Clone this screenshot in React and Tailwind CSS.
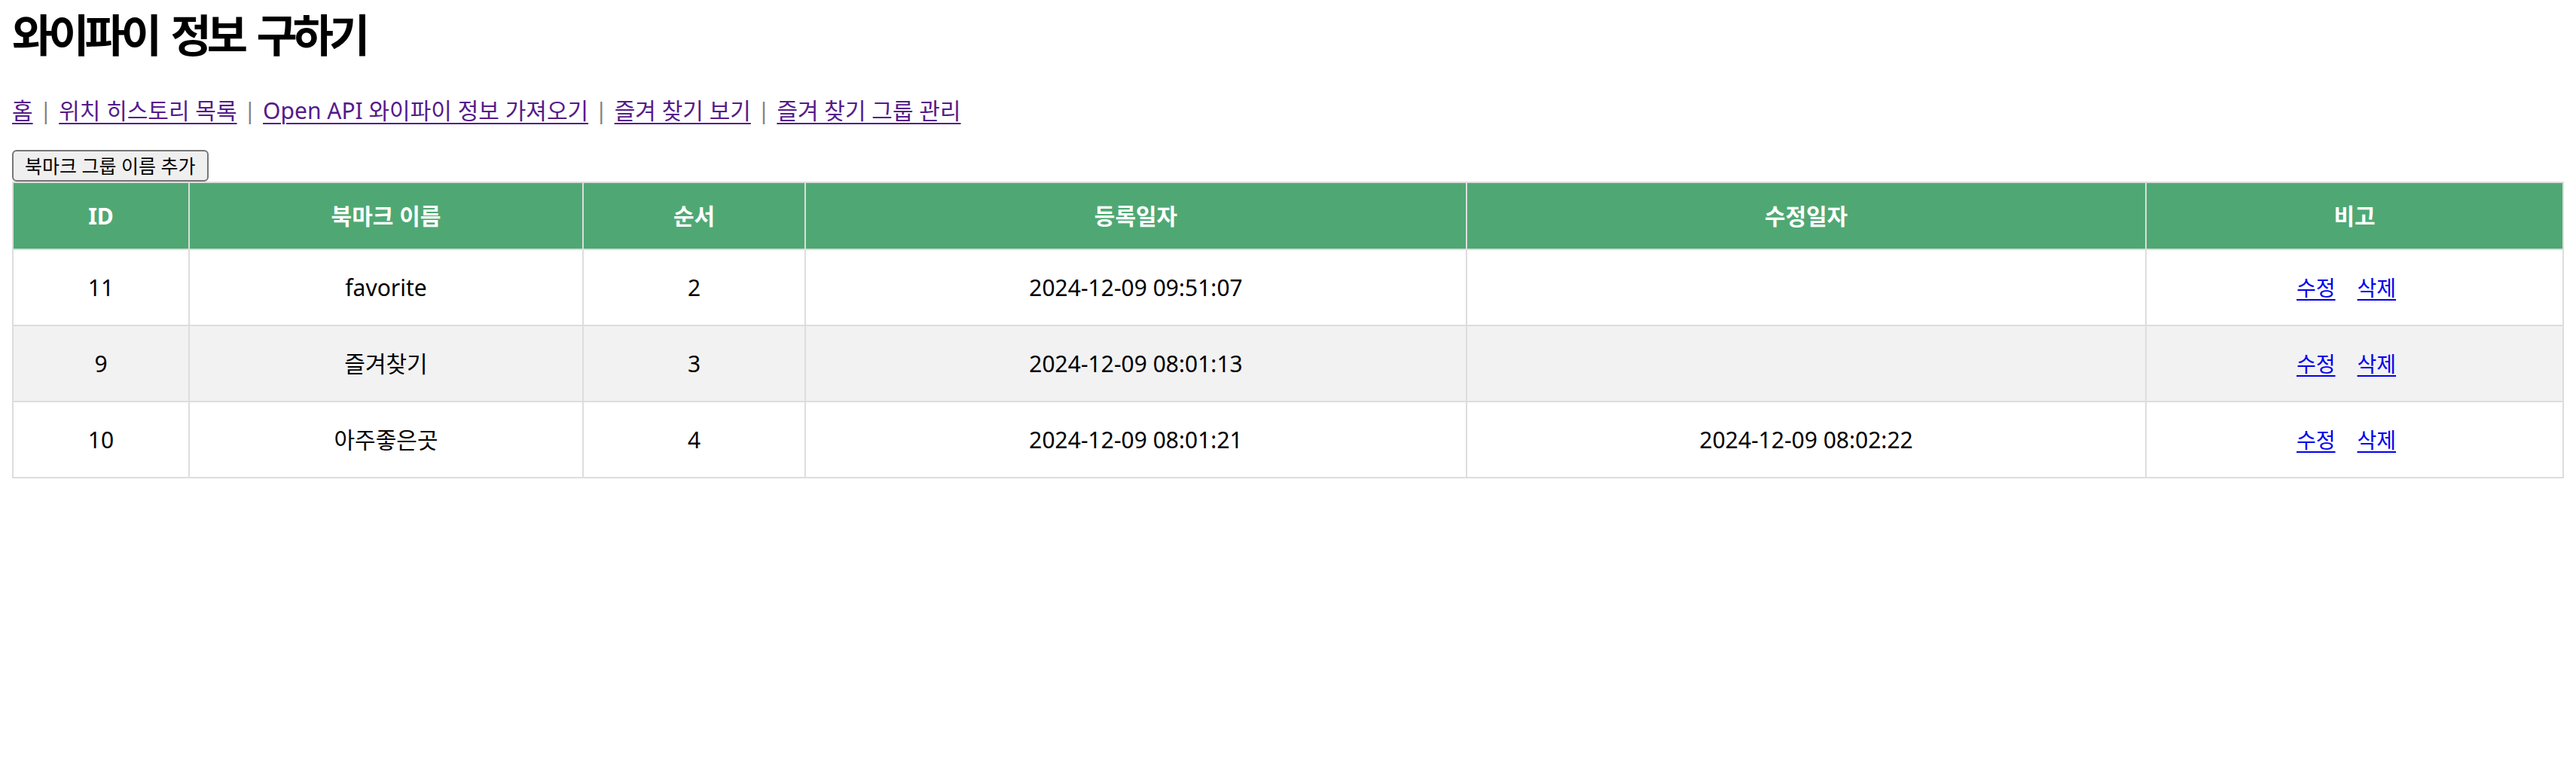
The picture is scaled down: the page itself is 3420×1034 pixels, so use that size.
import React from "react";

const rows = [
  { id: "11", name: "favorite", order: "2", created: "2024-12-09 09:51:07", updated: "" },
  { id: "9", name: "즐겨찾기", order: "3", created: "2024-12-09 08:01:13", updated: "" },
  { id: "10", name: "아주좋은곳", order: "4", created: "2024-12-09 08:01:21", updated: "2024-12-09 08:02:22" },
];

const links = ["홈", "위치 히스토리 목록", "Open API 와이파이 정보 가져오기", "즐겨 찾기 보기", "즐겨 찾기 그룹 관리"];

export default function App() {
  return (
    <div
      className="min-h-screen bg-white px-[16px] text-black"
      style={{ fontFamily: '"Noto Sans", "Noto Sans CJK KR", sans-serif' }}
    >
      <h1 className="m-0 text-[59px] font-bold leading-[88px] tracking-[-6px] [word-spacing:10px] [font-family:'Noto_Sans_CJK_KR',sans-serif]">
        와이파이 정보 구하기
      </h1>

      <nav className="mt-[35px] flex h-[48px] items-center text-[30px] leading-[48px]">
        {links.map((l, i) => (
          <React.Fragment key={l}>
            {i > 0 && <span className="px-[9px] text-[#808080]">|</span>}
            <a href="#" className="text-[#551a8b] underline decoration-2 underline-offset-[5px]">
              {l}
            </a>
          </React.Fragment>
        ))}
      </nav>

      <button className="mt-[28px] block h-[42px] rounded-[6px] border-2 border-[#767676] bg-[#efefef] px-[15px] text-[25px] leading-none text-black">
        북마크 그룹 이름 추가
      </button>

      <table className="w-full table-fixed border-collapse text-[30px]">
        <thead>
          <tr className="bg-[#4fa873] text-white">
            <th className="h-[89px] w-[234px] border-2 border-[#dddddd] p-0 font-bold">ID</th>
            <th className="h-[89px] w-[523px] border-2 border-[#dddddd] p-0 font-bold">북마크 이름</th>
            <th className="h-[89px] w-[295px] border-2 border-[#dddddd] p-0 font-bold">순서</th>
            <th className="h-[89px] w-[878px] border-2 border-[#dddddd] p-0 font-bold">등록일자</th>
            <th className="h-[89px] w-[902px] border-2 border-[#dddddd] p-0 font-bold">수정일자</th>
            <th className="h-[89px] border-2 border-[#dddddd] p-0 font-bold">비고</th>
          </tr>
        </thead>
        <tbody>
          {rows.map((r, i) => (
            <tr key={r.id} className={i === 1 ? "bg-[#f2f2f2]" : "bg-white"}>
              <td className="h-[101px] border-2 border-[#dddddd] p-0 text-center">{r.id}</td>
              <td className="h-[101px] border-2 border-[#dddddd] p-0 text-center">{r.name}</td>
              <td className="h-[101px] border-2 border-[#dddddd] p-0 text-center">{r.order}</td>
              <td className="h-[101px] border-2 border-[#dddddd] p-0 text-center">{r.created}</td>
              <td className="h-[101px] border-2 border-[#dddddd] p-0 text-center">{r.updated}</td>
              <td className="h-[101px] border-2 border-[#dddddd] p-0 text-center">
                <span className="inline-flex gap-[29px] pr-[22px] text-[28px]">
                  <a href="#" className="text-[#0000ee] underline decoration-2 underline-offset-[4px] [font-family:'Noto_Sans_CJK_KR',sans-serif]">수정</a>
                  <a href="#" className="text-[#0000ee] underline decoration-2 underline-offset-[4px] [font-family:'Noto_Sans_CJK_KR',sans-serif]">삭제</a>
                </span>
              </td>
            </tr>
          ))}
        </tbody>
      </table>
    </div>
  );
}
